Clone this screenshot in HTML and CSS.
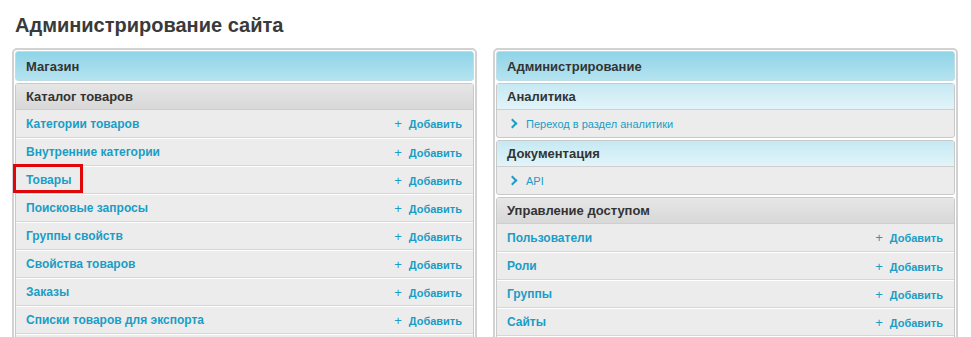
FILE: index.html
```html
<!DOCTYPE html>
<html lang="ru">

<head>
    <meta charset="UTF-8">
    <meta name="viewport" content="width=device-width, initial-scale=1.0">
    <title>Администрирование сайта</title>
    <link rel="stylesheet" href="styles.css">
</head>

<body>
    <h1 class="page-title">Администрирование сайта</h1>
    <div class="columns">
        <!-- Магазин -->
        <div class="panel">
            <div class="panel-head">Магазин</div>
            <div class="box">
                <div class="box-head gray">Каталог товаров</div>
                <div class="row"><a class="link">Категории товаров</a><a class="add">Добавить</a></div>
                <div class="row"><a class="link">Внутренние категории</a><a class="add">Добавить</a></div>
                <div class="row"><a class="link marked">Товары</a><a class="add">Добавить</a></div>
                <div class="row"><a class="link">Поисковые запросы</a><a class="add">Добавить</a></div>
                <div class="row"><a class="link">Группы свойств</a><a class="add">Добавить</a></div>
                <div class="row"><a class="link">Свойства товаров</a><a class="add">Добавить</a></div>
                <div class="row"><a class="link">Заказы</a><a class="add">Добавить</a></div>
                <div class="row"><a class="link">Списки товаров для экспорта</a><a class="add">Добавить</a></div>
                <div class="row"></div>
            </div>
        </div>
        <!-- Администрирование -->
        <div class="panel">
            <div class="panel-head">Администрирование</div>
            <div class="box">
                <div class="box-head blue">Аналитика</div>
                <div class="row small"><a class="go">Переход в раздел аналитики</a></div>
            </div>
            <div class="box">
                <div class="box-head blue">Документация</div>
                <div class="row small"><a class="go">API</a></div>
            </div>
            <div class="box">
                <div class="box-head gray">Управление доступом</div>
                <div class="row"><a class="link">Пользователи</a><a class="add">Добавить</a></div>
                <div class="row"><a class="link">Роли</a><a class="add">Добавить</a></div>
                <div class="row"><a class="link">Группы</a><a class="add">Добавить</a></div>
                <div class="row"><a class="link">Сайты</a><a class="add">Добавить</a></div>
                <div class="row"></div>
            </div>
        </div>
    </div>
</body>

</html>
```

FILE: styles.css
```css
* {
    margin: 0;
    padding: 0;
    box-sizing: border-box;
}

body {
    font-family: "Liberation Sans", Arial, sans-serif;
    color: #333;
    background: #fff;
    padding: 13px 13px 0 12px;
    overflow: hidden;
}

.page-title {
    font-size: 20px;
    font-weight: bold;
    color: #3a3a3a;
    margin: 0 0 11px 3px;
    line-height: 24px;
}

.columns {
    display: flex;
    gap: 16px;
}

.panel {
    flex: 1;
    border: 2px solid #d2d2d2;
    border-radius: 5px;
    padding: 1px 1px 0 1px;
}

/* голубая шапка колонки */
.panel-head {
    height: 30px;
    border: 1px solid #bfdde6;
    border-radius: 3px;
    background: linear-gradient(#8fd4e7, #b5e3f0);
    font-size: 13px;
    font-weight: bold;
    line-height: 29px;
    padding-left: 10px;
    margin-bottom: 2px;
}

.box {
    border: 1px solid #c9c9c9;
    border-radius: 3px;
    background: #ececec;
    margin-bottom: 2px;
}

.box-head {
    height: 26px;
    font-size: 13px;
    font-weight: bold;
    line-height: 26px;
    padding-left: 10px;
    border-bottom: 1px solid #cfcfcf;
}

.box-head.gray {
    background: linear-gradient(#e6e6e6, #d8d8d8);
}

.box-head.blue {
    background: linear-gradient(#c6e9f3, #e2f4f9);
}

.row {
    height: 28px;
    display: flex;
    align-items: center;
    justify-content: space-between;
    padding: 0 10px;
    border-top: 1px solid #fff;
    border-bottom: 1px solid #d6d6d6;
}

.box-head + .row {
    border-top: none;
}

.row.small {
    height: 27px;
    border-bottom: none;
    justify-content: flex-start;
}

.link {
    font-size: 12px;
    font-weight: bold;
    color: #1a9dc6;
    position: relative;
}

/* красная рамка вокруг "Товары" */
.marked::after {
    content: "";
    position: absolute;
    left: -13px;
    top: -9px;
    width: 64px;
    height: 23px;
    border: 3px solid #e0070b;
}

.add {
    font-size: 11px;
    font-weight: bold;
    color: #1a9dc6;
    padding-right: 1px;
}

.add::before {
    content: "+";
    font-weight: normal;
    font-size: 13px;
    margin-right: 7px;
}

.go {
    font-size: 11px;
    color: #1a9dc6;
    padding-left: 2px;
}

.go::before {
    content: "";
    display: inline-block;
    width: 5px;
    height: 5px;
    border-top: 2px solid #1a9dc6;
    border-right: 2px solid #1a9dc6;
    transform: rotate(45deg);
    margin: 0 10px 1px 0;
}
```
